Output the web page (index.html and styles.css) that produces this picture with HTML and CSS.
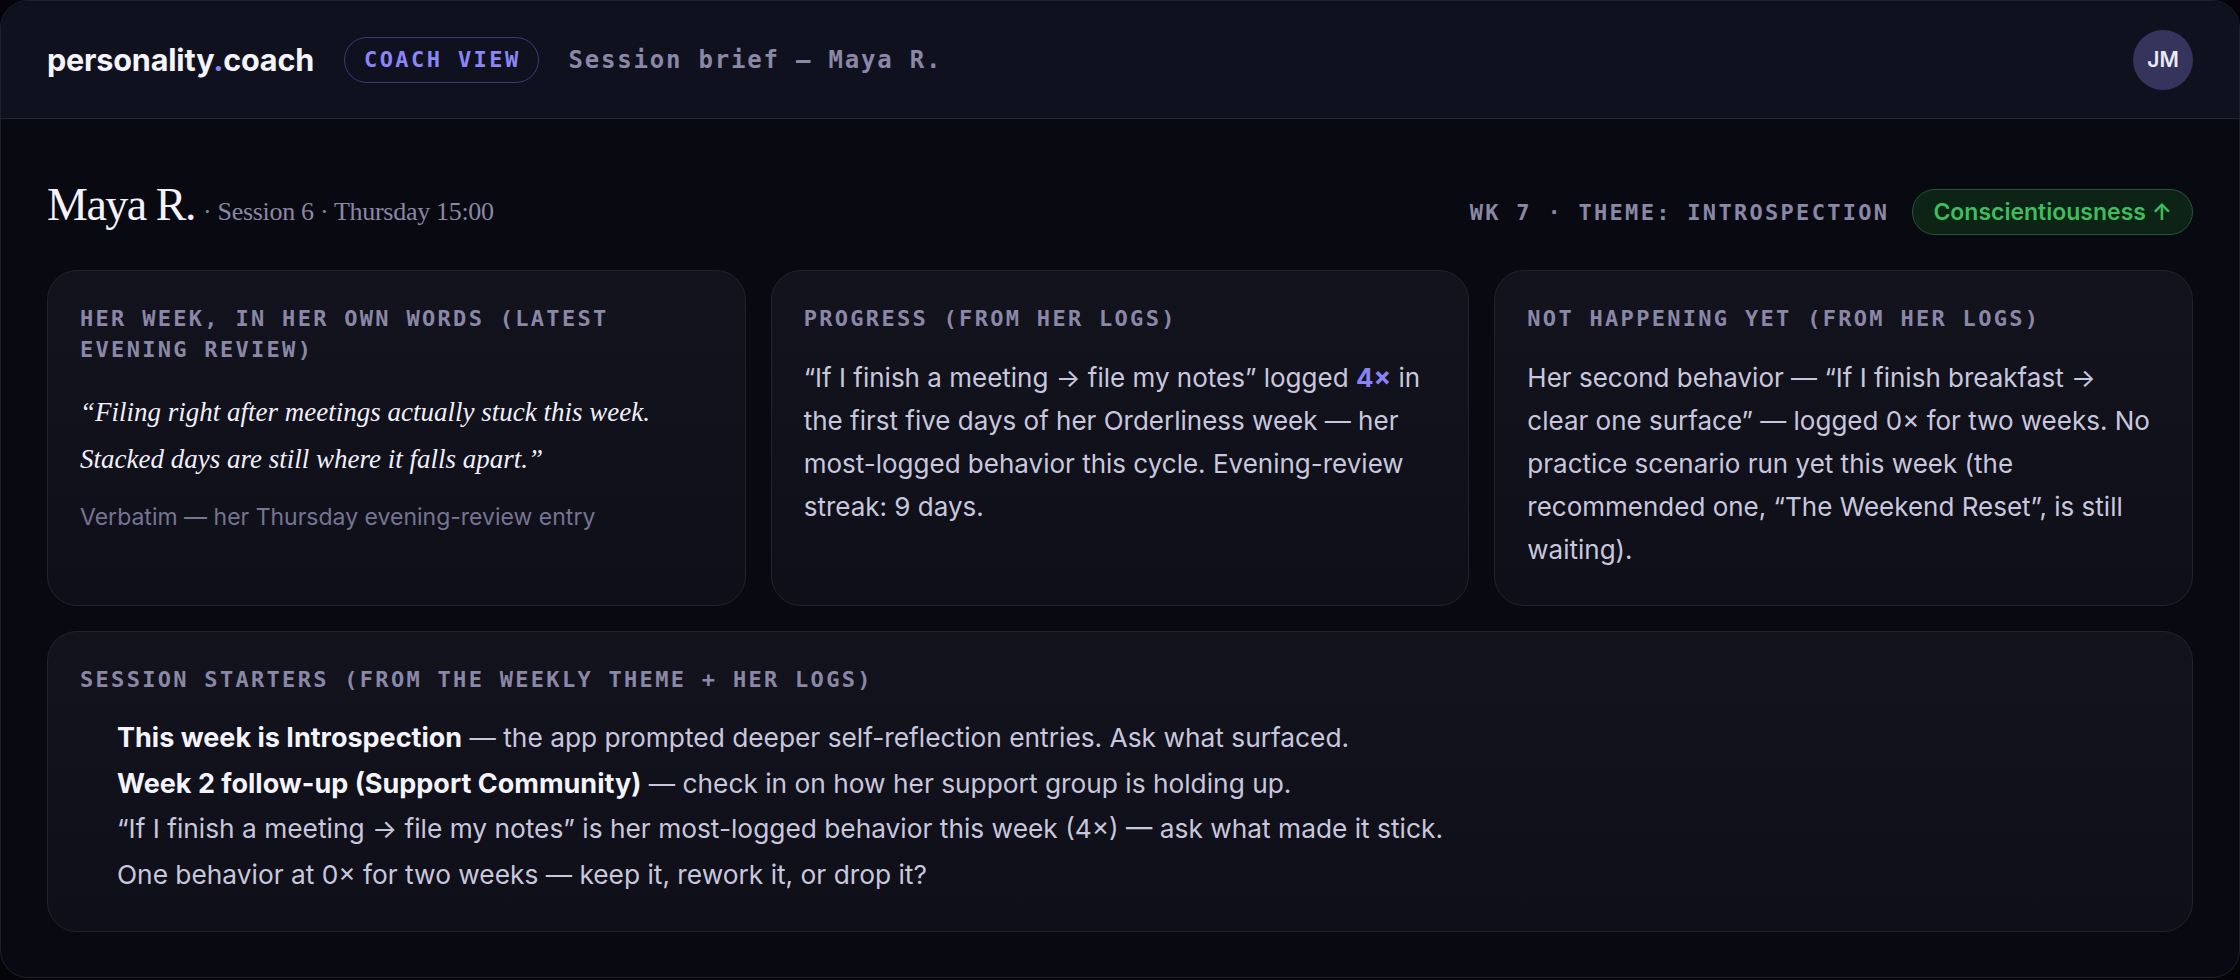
FILE: index.html
```html
<!DOCTYPE html>
<html lang="en">
<head>
  <meta charset="UTF-8" />
  <title>Session brief — Maya R.</title>
  <link rel="stylesheet" href="styles.css">
</head>
<body>
  <div class="app">
    <header class="topbar">
      <div class="logo">personality<span class="dot">.</span>coach</div>
      <span class="badge">COACH VIEW</span>
      <span class="crumb">Session brief — Maya R.</span>
      <div class="avatar">JM</div>
    </header>

    <main class="brief">
      <div class="title-row">
        <h1>Maya R.<span class="sub">· Session 6 · Thursday 15:00</span></h1>
        <div class="meta">
          <span class="label">WK 7 · THEME: INTROSPECTION</span>
          <span class="pill">Conscientiousness ↑</span>
        </div>
      </div>

      <div class="cards">
        <section class="card">
          <h2 class="label">Her week, in her own words (latest evening review)</h2>
          <p class="quote">“Filing right after meetings actually stuck this week. Stacked days are still where it falls apart.”</p>
          <p class="caption">Verbatim — her Thursday evening-review entry</p>
        </section>

        <section class="card">
          <h2 class="label">Progress (from her logs)</h2>
          <p class="text">“If I finish a meeting → file my notes” logged <b class="accent">4×</b> in the first five days of her Orderliness week — her most-logged behavior this cycle. Evening-review streak: 9 days.</p>
        </section>

        <section class="card">
          <h2 class="label">Not happening yet (from her logs)</h2>
          <p class="text">Her second behavior — “If I finish breakfast → clear one surface” — logged 0× for two weeks. No practice scenario run yet this week (the recommended one, “The Weekend Reset”, is still waiting).</p>
        </section>
      </div>

      <section class="card starters">
        <h2 class="label">Session starters (from the weekly theme + her logs)</h2>
        <ul>
          <li><strong>This week is Introspection</strong> — the app prompted deeper self-reflection entries. Ask what surfaced.</li>
          <li><strong>Week 2 follow-up (Support Community)</strong> — check in on how her support group is holding up.</li>
          <li>“If I finish a meeting → file my notes” is her most-logged behavior this week (4×) — ask what made it stick.</li>
          <li>One behavior at 0× for two weeks — keep it, rework it, or drop it?</li>
        </ul>
      </section>
    </main>
  </div>
</body>
</html>
```

FILE: styles.css
```css
body {
  margin: 0;
  background: #050509;
  font-family: 'Inter', 'Noto Sans', sans-serif;
  color: #c9c7dd;
}

.app {
  box-sizing: border-box;
  height: 978px;
  border: 1px solid #20202c;
  border-radius: 28px;
  overflow: hidden;
  background: #090a11;
  display: flex;
  flex-direction: column;
}

/* top bar */

.topbar {
  box-sizing: border-box;
  height: 118px;
  display: flex;
  align-items: center;
  gap: 30px;
  padding: 0 46px;
  background: #10111f;
  border-bottom: 1px solid #262634;
}

.logo {
  font-size: 30.6px;
  font-weight: 700;
  color: #f5f4fb;
  letter-spacing: -0.2px;
}

.logo .dot {
  color: #8a83f4;
}

.badge {
  box-sizing: border-box;
  height: 46px;
  display: flex;
  align-items: center;
  padding: 0 17px 0 19px;
  border: 1.5px solid #3c3a7c;
  border-radius: 23px;
  font-family: 'DejaVu Sans Mono', monospace;
  font-size: 22px;
  font-weight: 700;
  letter-spacing: 2.4px;
  color: #8a86f6;
}

.crumb {
  font-family: 'DejaVu Sans Mono', monospace;
  font-size: 24px;
  font-weight: 700;
  letter-spacing: 1.8px;
  color: #8a88a6;
}

.avatar {
  margin-left: auto;
  width: 60px;
  height: 60px;
  border-radius: 50%;
  background: #34345c;
  color: #eceaf8;
  font-size: 21px;
  font-weight: 600;
  display: flex;
  align-items: center;
  justify-content: center;
}

/* brief */

.brief {
  padding: 58px 46px 0;
  display: flex;
  flex-direction: column;
  gap: 25px;
}

.title-row {
  display: flex;
  align-items: baseline;
  justify-content: space-between;
  margin-bottom: 10px;
}

h1 {
  margin: 0;
  font-family: 'Liberation Serif', serif;
  font-size: 46px;
  font-weight: 400;
  line-height: 1.2;
  letter-spacing: -1.5px;
  color: #f4f2fb;
}

h1 .sub {
  margin-left: 8px;
  font-size: 26px;
  letter-spacing: -0.3px;
  color: #8a88a6;
}

.meta {
  display: flex;
  align-items: baseline;
  gap: 23px;
}

.label {
  margin: 0;
  font-family: 'DejaVu Sans Mono', monospace;
  font-size: 22px;
  font-weight: 700;
  line-height: 31px;
  letter-spacing: 2.3px;
  text-transform: uppercase;
  color: #8a88a6;
}

.pill {
  display: inline-block;
  padding: 8px 20px;
  line-height: 28px;
  border: 1px solid #1f5a33;
  border-radius: 23px;
  background: #0c2316;
  color: #3fbd5d;
  font-size: 23px;
  font-weight: 600;
}

.cards {
  display: grid;
  grid-template-columns: repeat(3, 1fr);
  gap: 25px;
}

.card {
  background: linear-gradient(#12131d, #0e0f18);
  border: 1px solid #22222e;
  border-radius: 30px;
  padding: 32px 33px 34px 32px;
}

.quote {
  margin: 24px 0 0;
  font-family: 'Liberation Serif', serif;
  font-style: italic;
  font-size: 27px;
  line-height: 47px;
  color: #f1effa;
}

.caption {
  margin: 19px 0 0;
  font-size: 23px;
  line-height: 30px;
  color: #767492;
}

.text {
  margin: 22px 0 0;
  font-size: 26px;
  line-height: 43px;
}

.accent {
  color: #8a83f4;
  font-weight: 700;
}

.starters {
  padding-bottom: 34px;
}

.starters ul {
  margin: 20px 0 0;
  padding-left: 37px;
  list-style: none;
}

.starters li {
  font-size: 26.3px;
  line-height: 45.5px;
}

.starters strong {
  color: #f5f4fc;
  font-size: 27px;
  font-weight: 700;
}
```
